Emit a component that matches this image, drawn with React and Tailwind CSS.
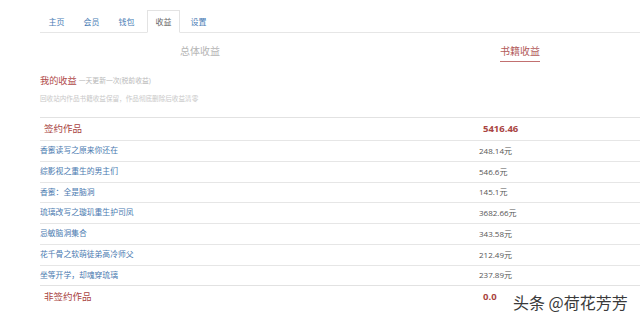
import React from "react";

const rows = [
  ["香蜜读写之原来你还在", "248.14元"],
  ["综影视之重生的男主们", "546.6元"],
  ["香蜜：全是脑洞", "145.1元"],
  ["琉璃改写之璇玑重生护司凤", "3682.66元"],
  ["忌敏脑洞集合", "343.58元"],
  ["花千骨之软萌徒弟高冷师父", "212.49元"],
  ["坐等开学，却魂穿琉璃", "237.89元"],
];

const tabs = ["主页", "会员", "钱包", "收益", "设置"];

export default function App() {
  const font = { fontFamily: '"Open Sans", "Noto Sans CJK SC", sans-serif' };
  return (
    <div className="relative w-[640px] h-[321px] overflow-hidden bg-white" style={font}>
      <div className="ml-[40px] w-[640px]">
        <div className="pt-[10px]">
          <div className="flex border-b border-[#e6e6e6] h-[23px]">
            {tabs.map((t) => (
              <div
                key={t}
                className={
                  "w-[33px] h-[23px] mr-[2px] flex items-center justify-center text-[8px] " +
                  (t === "收益"
                    ? "border border-[#e3e3e3] border-b-white -mb-px bg-white text-[#666] ml-[2px]"
                    : "text-[#4a7db5]")
                }
              >
                {t}
              </div>
            ))}
          </div>
        </div>
        <div className="flex h-[38px] items-start pt-[11px]">
          <div className="flex-1 text-center text-[10px] text-[#b5b5b5] leading-[14px]">总体收益</div>
          <div className="flex-1 flex justify-center">
            <span className="text-[10px] text-[#b25a5a] leading-[14px] border-b border-[#c27070] pb-[3px]">书籍收益</span>
          </div>
        </div>
        <div className="h-[20px] flex items-center">
          <span className="text-[9.2px] text-[#b04a4a]">我的收益</span>
          <span className="ml-[2px] text-[6.8px] text-[#b8b8b8]">一天更新一次(税前收益)</span>
        </div>
        <div className="h-[16px] flex items-center text-[6.6px] text-[#c8c8c8]">
          回收站内作品书籍收益保留，作品彻底删除后收益清零
        </div>
        <div className="h-[10px]" />
        <div className="border-t border-[#e2e2e2] grid grid-cols-[439px_1fr] h-[23px] items-center">
          <div className="pl-[4px] text-[9.5px] text-[#a94442]">签约作品</div>
          <div className="pl-[4px] text-[9.5px] font-bold text-[#a94442]">5416.46</div>
        </div>
        {rows.map(([n, v]) => (
          <div key={n} className="border-t border-[#e6e6e6] grid grid-cols-[439px_1fr] h-[20.76px] items-center">
            <div className="text-[7.8px] text-[#4a7ab0]">{n}</div>
            <div className="text-[8px] text-[#555]">{v}</div>
          </div>
        ))}
        <div className="border-t border-[#e2e2e2] grid grid-cols-[439px_1fr] h-[23px] items-center">
          <div className="pl-[4px] text-[9.5px] text-[#a94442]">非签约作品</div>
          <div className="pl-[4px] text-[9.5px] font-bold text-[#a94442]">0.0</div>
        </div>
      </div>
      <div
        className="absolute left-[513px] top-[292px] text-[16px] text-[#3a3a3a] leading-[20px]"
        style={{ fontFamily: '"Noto Sans CJK SC", sans-serif', textShadow: "0 0 2px #fff, 0 0 2px #fff" }}
      >
        头条 @荷花芳芳
      </div>
    </div>
  );
}
